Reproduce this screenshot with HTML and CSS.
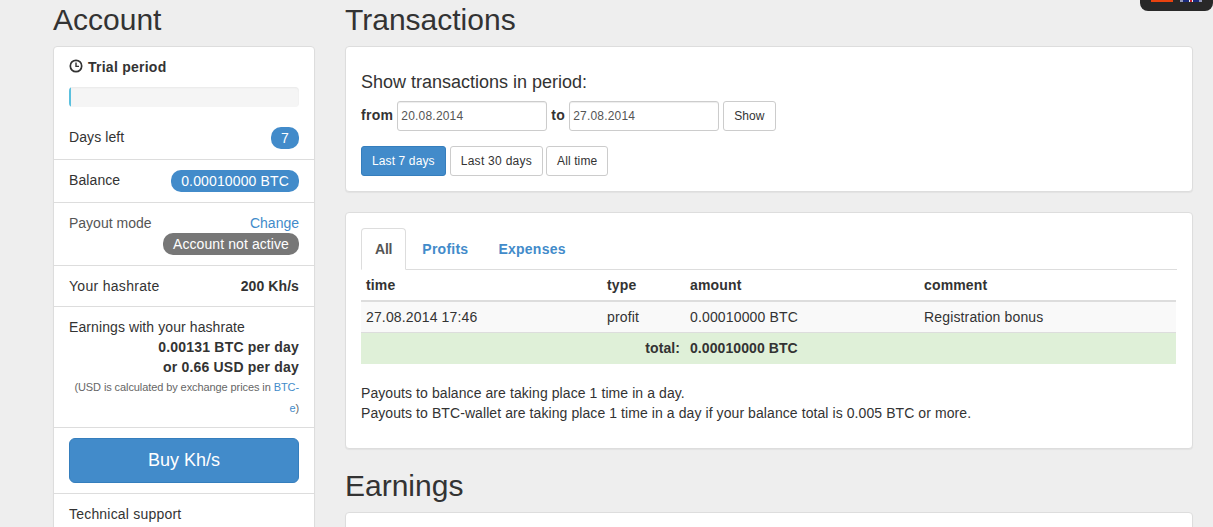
FILE: index.html
```html
<!DOCTYPE html>
<html>
<head>
<meta charset="utf-8">
<title>Transactions</title>
<link rel="stylesheet" href="styles.css">
</head>
<body>
<div class="lang-bar">
  <span class="flag flag-ru"></span>
  <svg class="flag flag-en" viewBox="0 0 22 2" width="22" height="2"><rect width="22" height="2" fill="#1a2a7a"/><path d="M0 0l3 2M3 0L0 2M19 0l3 2M22 0l-3 2" stroke="#eee" stroke-width=".7"/><rect x="9" width="4" height="2" fill="#eee"/><rect x="10" width="2" height="2" fill="#c8202f"/></svg>
</div>
<div class="layout">
  <aside class="side">
    <h1 class="title">Account</h1>
    <div class="panel">
      <div class="group group-trial">
        <div class="trial-head">
          <svg class="clock" viewBox="0 0 14 14" width="14" height="14"><circle cx="7" cy="7" r="5.7" fill="none" stroke="#333" stroke-width="1.7"/><path d="M7 3.6V7.4H10" fill="none" stroke="#333" stroke-width="1.4"/></svg>
          <b>Trial period</b>
        </div>
        <div class="progress"><div class="progress-bar"></div></div>
        <div class="row row-days"><span class="lift">Days left</span><span class="badge">7</span></div>
      </div>
      <div class="group row group-balance"><span class="lift">Balance</span><span class="badge">0.00010000 BTC</span></div>
      <div class="group group-payout">
        <div class="row muted"><span>Payout mode</span><a class="link" href="#">Change</a></div>
        <div class="right"><span class="badge badge-grey">Account not active</span></div>
      </div>
      <div class="group row group-hash"><span class="wider">Your hashrate</span><b>200 Kh/s</b></div>
      <div class="group group-earn">
        <div>Earnings with your hashrate</div>
        <div class="right"><b class="wide">0.00131 BTC per day</b></div>
        <div class="right"><b class="wide">or 0.66 USD per day</b></div>
        <div class="right small">(USD is calculated by exchange prices in <a class="link" href="#">BTC-e</a>)</div>
      </div>
      <div class="group group-buy"><a class="btn-buy" href="#">Buy Kh/s</a></div>
      <div class="group wide">Technical support</div>
    </div>
  </aside>
  <main class="main">
    <h1 class="title">Transactions</h1>
    <div class="panel panel-filter">
      <div class="filter-title">Show transactions in period:</div>
      <div class="filter-row">
        <b class="filter-label">from</b><input class="date" value="20.08.2014">
        <b class="filter-label">to</b><input class="date" value="27.08.2014">
        <a class="btn btn-show" href="#">Show</a>
      </div>
      <div class="filter-btns">
        <a class="btn btn-primary" href="#">Last 7 days</a>
        <a class="btn btn-30" href="#">Last 30 days</a>
        <a class="btn btn-all" href="#">All time</a>
      </div>
    </div>
    <div class="panel panel-tx">
      <div class="tabs">
        <a class="tab active" href="#">All</a>
        <a class="tab" href="#">Profits</a>
        <a class="tab" href="#">Expenses</a>
      </div>
      <table class="table">
        <colgroup><col class="c1"><col class="c2"><col class="c3"><col></colgroup>
        <thead><tr><th>time</th><th>type</th><th>amount</th><th>comment</th></tr></thead>
        <tbody>
          <tr class="odd"><td>27.08.2014 17:46</td><td>profit</td><td>0.00010000 BTC</td><td>Registration bonus</td></tr>
          <tr class="total"><td colspan="2" class="total-label">total:</td><td>0.00010000 BTC</td><td></td></tr>
        </tbody>
      </table>
      <p class="note">Payouts to balance are taking place 1 time in a day.<br>Payouts to BTC-wallet are taking place 1 time in a day if your balance total is 0.005 BTC or more.</p>
    </div>
    <h1 class="title title-earn">Earnings</h1>
    <div class="panel panel-earn"></div>
  </main>
</div>
</body>
</html>
```
FILE: styles.css
```css
* { box-sizing: border-box; }
html, body { margin: 0; height: 527px; overflow: hidden; }
body {
  background: #eee;
  color: #333;
  font-family: "Liberation Sans", Arial, sans-serif;
  font-size: 14px;
  line-height: 20px;
  letter-spacing: .09px;
  position: relative;
}
a { text-decoration: none; }
.lang-bar {
  position: absolute;
  top: 0; right: 0;
  width: 73px; height: 11px;
  background: #282828;
  border-radius: 0 0 8px 8px;
  display: flex;
  gap: 7px;
  padding-left: 11px;
  align-items: flex-start;
}
.flag { display: block; height: 2px; }
.flag-ru { width: 22px; background: #e8420f; }
.layout {
  display: flex;
  gap: 30px;
  padding: 0 20px 0 53px;
}
.side { width: 262px; flex: none; }
.main { flex: 1; min-width: 0; }
.title {
  font-size: 30px;
  font-weight: 400;
  line-height: 33px;
  letter-spacing: 0;
  margin: 3px 0 10px;
}
.panel {
  background: #fff;
  border: 1px solid #ddd;
  border-radius: 4px;
  box-shadow: 0 1px 1px rgba(0,0,0,.05);
}
.group { padding: 10px 15px; border-bottom: 1px solid #ddd; }
.group:last-child { border-bottom: 0; }
.row { display: flex; justify-content: space-between; align-items: center; }
.right { text-align: right; }
.muted { color: #555; letter-spacing: 0; }
.link { color: #428bca; }
.lift { margin-top: -2px; }
.wide { letter-spacing: .2px; }
.wider { letter-spacing: .3px; }
.group-trial { padding-top: 10px; height: 113px; }
.trial-head { display: flex; align-items: center; gap: 5px; height: 20px; margin-bottom: 10px; letter-spacing: .25px; }
.clock { margin-top: -2px; }
.progress {
  height: 20px;
  background: #f5f5f5;
  border-radius: 4px;
  overflow: hidden;
  box-shadow: inset 0 1px 2px rgba(0,0,0,.05);
  margin-bottom: 20px;
}
.progress-bar { width: 2px; height: 100%; background: #5bc0de; }
.badge {
  display: inline-block;
  background: #428bca;
  color: #fff;
  border-radius: 10px;
  font-size: 14px;
  line-height: 20px;
  height: 22px;
  padding: 1px 10px;
  letter-spacing: .14px;
}
.badge-grey { background: #777; display: inline-block; letter-spacing: .09px; }
.group-balance { height: 43px; padding-top: 10px; }
.group-payout { height: 63px; padding-top: 10px; }
.group-payout .row { height: 20px; }
.group-hash { height: 41px; }
.group-earn { height: 121px; }
.small { font-size: 11px; color: #666; line-height: 21px; letter-spacing: -.09px; }
.group-buy { height: 66px; }
.btn-buy {
  display: block;
  height: 45px;
  background: #428bca;
  border: 1px solid #357ebd;
  border-radius: 6px;
  color: #fff;
  font-size: 18px;
  line-height: 43px;
  letter-spacing: 0;
  text-align: center;
}
.panel-filter { height: 146px; padding: 24px 15px 0; }
.filter-title { font-size: 18px; line-height: 22px; letter-spacing: 0; margin-bottom: 8px; }
.filter-row { display: flex; align-items: center; gap: 4px; height: 30px; margin-bottom: 15px; }
.filter-label { letter-spacing: .3px; margin-top: -2px; }
.date {
  width: 150px;
  height: 30px;
  border: 1px solid #ccc;
  border-radius: 3px;
  padding: 0 3px;
  font: 12px "Liberation Sans", Arial, sans-serif;
  letter-spacing: .2px;
  color: #555;
  background: #fff;
  box-shadow: inset 0 1px 1px rgba(0,0,0,.075);
}
.btn {
  display: inline-block;
  height: 30px;
  padding: 0 10px;
  border: 1px solid #ccc;
  border-radius: 3px;
  color: #333;
  background: #fff;
  font-size: 12px;
  line-height: 28px;
  letter-spacing: .12px;
}
.btn-primary { background: #428bca; border-color: #357ebd; color: #fff; }
.btn-30 { letter-spacing: .28px; }
.btn-all { letter-spacing: .1px; margin-left: -1px; }
.filter-btns { display: flex; gap: 4px; }
.panel-tx { margin-top: 20px; height: 237px; padding: 15px 15px 0; }
.tabs { display: flex; height: 42px; border-bottom: 1px solid #ddd; }
.tab {
  font-weight: 700;
  color: #428bca;
  padding: 11px 15px 0;
  height: 42px;
  letter-spacing: .25px;
}
.tab.active {
  color: #555;
  background: #fff;
  border: 1px solid #ddd;
  border-bottom-color: #fff;
  border-radius: 4px 4px 0 0;
  padding: 10px 13px 0;
  margin-right: 1px;
  letter-spacing: -.2px;
}
.table { width: 815px; border-collapse: collapse; table-layout: fixed; letter-spacing: .15px; }
.c1 { width: 241px; }
.c2 { width: 83px; }
.c3 { width: 234px; }
.table th { text-align: left; padding: 5px; line-height: 20px; height: 31px; border-bottom: 2px solid #ddd; }
.table td { padding: 5px; line-height: 20px; height: 31px; }
.odd td { background: #f9f9f9; border-bottom: 1px solid #ddd; height: 31px; }
.total td { background: #dff0d8; font-weight: 700; letter-spacing: .08px; }
.total-label { text-align: right; }
.note { margin: 19px 0 0; letter-spacing: .08px; }
.title-earn { margin-top: 20px; }
.panel-earn { height: 40px; }
```
